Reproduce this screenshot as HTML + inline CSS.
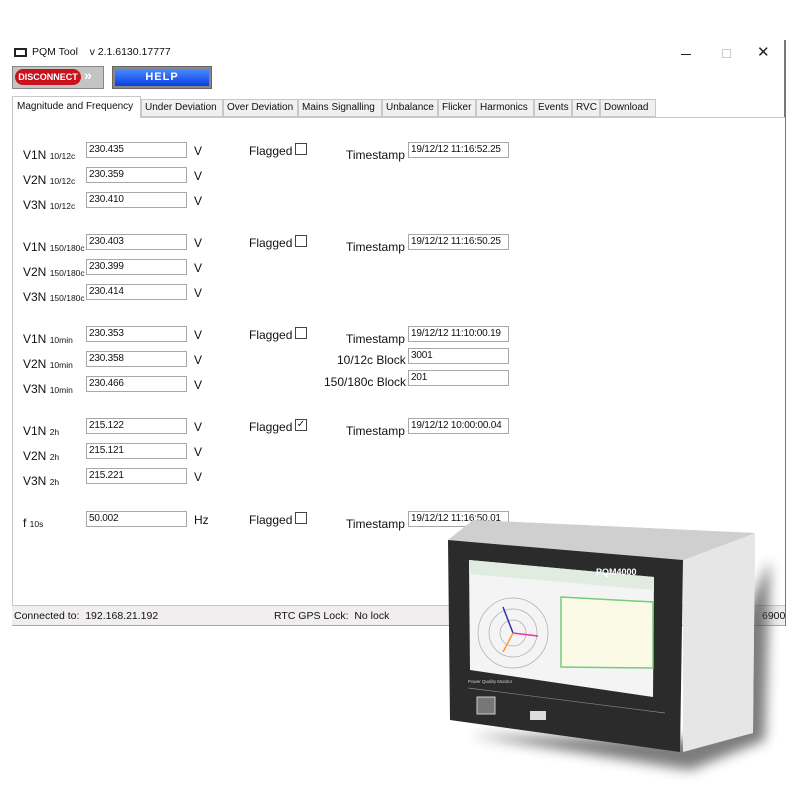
<!DOCTYPE html>
<html><head><meta charset="utf-8"><style>
*{margin:0;padding:0;box-sizing:border-box}
body{width:800px;height:800px;background:#fff;position:relative;overflow:hidden;font-family:"Liberation Sans",sans-serif;font-size:12px;color:#111}
.a{position:absolute;white-space:nowrap}
.in{position:absolute;width:101px;height:16px;border:1px solid #a8a8a8;background:#fff;font-size:10px;letter-spacing:-0.2px;padding-left:2px;line-height:14px;white-space:nowrap;overflow:hidden}
.ts{left:408px}
.lab{font-size:12px}
.lab small{font-size:8.5px}
.cb{position:absolute;width:12px;height:12px;border:1px solid #444;background:#fff}
.tab{position:absolute;top:99px;height:18px;border:1px solid #c8c8c8;background:#f0f0f0;font-size:10px;line-height:16px;padding:0 3px;white-space:nowrap;overflow:hidden}
</style></head><body>
<div class="a" style="left:14px;top:48px;width:13px;height:9px;border:2px solid #222;"></div>
<div class="a" style="left:32px;top:46px;font-size:10.5px">PQM Tool &nbsp; &nbsp;v 2.1.6130.17777</div>
<div class="a" style="left:681px;top:54px;width:10px;height:1px;background:#222"></div>
<div class="a" style="left:722px;top:49px;width:9px;height:9px;border:1px solid #ccc"></div>
<div class="a" style="left:757px;top:43px;font-size:15px;color:#222">✕</div>
<div class="a" style="left:784px;top:40px;width:2px;height:586px;background:#777"></div>
<div class="a" style="left:12px;top:66px;width:92px;height:23px;background:#c4c4c4;border:1px solid #888"></div>
<div class="a" style="left:15px;top:69px;width:66px;height:16px;background:#c8121c;border-radius:8px;color:#fff;font-weight:bold;font-size:9px;line-height:16px;text-align:center">DISCONNECT</div>
<div class="a" style="left:84px;top:67px;font-size:14px;color:#fff;font-weight:bold">»</div>
<div class="a" style="left:112px;top:66px;width:100px;height:23px;background:#888;border:1px solid #666"></div>
<div class="a" style="left:115px;top:69px;width:94px;height:17px;background:linear-gradient(#4a8bff,#0a3fe0);color:#fff;font-weight:bold;font-size:11px;line-height:17px;text-align:center;letter-spacing:1px">HELP</div>
<div class="a" style="left:12px;top:117px;width:773px;height:489px;border:1px solid #c8c8c8;border-right:none;background:#fff"></div>
<div class="tab" style="left:12px;top:96px;height:22px;background:#fff;border-bottom:none;padding:0 4px;line-height:20px;width:129px">Magnitude and Frequency</div>
<div class="tab" style="left:141px;width:82px">Under Deviation</div>
<div class="tab" style="left:223px;width:75px">Over Deviation</div>
<div class="tab" style="left:298px;width:84px">Mains Signalling</div>
<div class="tab" style="left:382px;width:56px">Unbalance</div>
<div class="tab" style="left:438px;width:38px">Flicker</div>
<div class="tab" style="left:476px;width:58px">Harmonics</div>
<div class="tab" style="left:534px;width:38px">Events</div>
<div class="tab" style="left:572px;width:28px">RVC</div>
<div class="tab" style="left:600px;width:56px">Download</div>

<div class="a lab" style="left:23px;top:148px">V1N <small>10/12c</small></div>
<div class="a lab" style="left:23px;top:173px">V2N <small>10/12c</small></div>
<div class="a lab" style="left:23px;top:198px">V3N <small>10/12c</small></div>
<div class="in" style="left:86px;top:142px">230.435</div>
<div class="in" style="left:86px;top:167px">230.359</div>
<div class="in" style="left:86px;top:192px">230.410</div>
<div class="a lab" style="left:194px;top:144px">V</div><div class="a lab" style="left:194px;top:169px">V</div><div class="a lab" style="left:194px;top:194px">V</div>
<div class="a lab" style="left:249px;top:144px">Flagged</div><div class="cb" style="left:295px;top:143px"></div>
<div class="a lab" style="left:346px;top:148px">Timestamp</div><div class="in ts" style="top:142px">19/12/12 11:16:52.25</div>

<div class="a lab" style="left:23px;top:240px">V1N <small>150/180c</small></div>
<div class="a lab" style="left:23px;top:265px">V2N <small>150/180c</small></div>
<div class="a lab" style="left:23px;top:290px">V3N <small>150/180c</small></div>
<div class="in" style="left:86px;top:234px">230.403</div>
<div class="in" style="left:86px;top:259px">230.399</div>
<div class="in" style="left:86px;top:284px">230.414</div>
<div class="a lab" style="left:194px;top:236px">V</div><div class="a lab" style="left:194px;top:261px">V</div><div class="a lab" style="left:194px;top:286px">V</div>
<div class="a lab" style="left:249px;top:236px">Flagged</div><div class="cb" style="left:295px;top:235px"></div>
<div class="a lab" style="left:346px;top:240px">Timestamp</div><div class="in ts" style="top:234px">19/12/12 11:16:50.25</div>

<div class="a lab" style="left:23px;top:332px">V1N <small>10min</small></div>
<div class="a lab" style="left:23px;top:357px">V2N <small>10min</small></div>
<div class="a lab" style="left:23px;top:382px">V3N <small>10min</small></div>
<div class="in" style="left:86px;top:326px">230.353</div>
<div class="in" style="left:86px;top:351px">230.358</div>
<div class="in" style="left:86px;top:376px">230.466</div>
<div class="a lab" style="left:194px;top:328px">V</div><div class="a lab" style="left:194px;top:353px">V</div><div class="a lab" style="left:194px;top:378px">V</div>
<div class="a lab" style="left:249px;top:328px">Flagged</div><div class="cb" style="left:295px;top:327px"></div>
<div class="a lab" style="left:346px;top:332px">Timestamp</div><div class="in ts" style="top:326px">19/12/12 11:10:00.19</div>
<div class="a lab" style="left:337px;top:353px">10/12c Block</div><div class="in ts" style="top:348px">3001</div>
<div class="a lab" style="left:324px;top:375px">150/180c Block</div><div class="in ts" style="top:370px">201</div>

<div class="a lab" style="left:23px;top:424px">V1N <small>2h</small></div>
<div class="a lab" style="left:23px;top:449px">V2N <small>2h</small></div>
<div class="a lab" style="left:23px;top:474px">V3N <small>2h</small></div>
<div class="in" style="left:86px;top:418px">215.122</div>
<div class="in" style="left:86px;top:443px">215.121</div>
<div class="in" style="left:86px;top:468px">215.221</div>
<div class="a lab" style="left:194px;top:420px">V</div><div class="a lab" style="left:194px;top:445px">V</div><div class="a lab" style="left:194px;top:470px">V</div>
<div class="a lab" style="left:249px;top:420px">Flagged</div><div class="cb" style="left:295px;top:419px;font-size:10px;line-height:9px;text-align:center">✓</div>
<div class="a lab" style="left:346px;top:424px">Timestamp</div><div class="in ts" style="top:418px">19/12/12 10:00:00.04</div>

<div class="a lab" style="left:23px;top:516px">f <small>10s</small></div>
<div class="in" style="left:86px;top:511px">50.002</div>
<div class="a lab" style="left:194px;top:513px">Hz</div>
<div class="a lab" style="left:249px;top:513px">Flagged</div><div class="cb" style="left:295px;top:512px"></div>
<div class="a lab" style="left:346px;top:517px">Timestamp</div><div class="in ts" style="top:511px">19/12/12 11:16:50.01</div>
<div class="a" style="left:12px;top:606px;width:773px;height:20px;background:#f0eeee;border-bottom:1px solid #aaa"></div>
<div class="a" style="left:14px;top:610px;font-size:10.5px">Connected to:&nbsp; 192.168.21.192</div>
<div class="a" style="left:274px;top:610px;font-size:10.5px">RTC GPS Lock:&nbsp; No lock</div>
<div class="a" style="left:762px;top:610px;font-size:10.5px">6900</div>
<svg class="a" style="left:0;top:0" width="800" height="800">
<defs><filter id="b"><feGaussianBlur stdDeviation="6"/></filter></defs>
<polygon points="470,735 690,770 765,740 770,560 690,740" fill="#444" filter="url(#b)" opacity="0.7"/>
<polygon points="473,520 755,533 753,733 683,750 683,560" fill="#d8d8d8"/>
<polygon points="683,560 755,533 753,733 683,752" fill="#e6e6e6"/>
<polygon points="473,520 755,533 683,560 448,540" fill="#cfcfcf"/>
<polygon points="448,540 683,560 680,752 450,720" fill="#2b2b2b"/>
<polygon points="469,560 654,577 653,697 470,670" fill="#f4f4f4"/>
<polygon points="469,560 654,577 654,590 469,574" fill="#e0ece0"/>
<circle cx="513" cy="633" r="35" fill="none" stroke="#aaa" stroke-width="0.7"/>
<circle cx="513" cy="633" r="24" fill="none" stroke="#aaa" stroke-width="0.7"/>
<circle cx="513" cy="633" r="13" fill="none" stroke="#aaa" stroke-width="0.7"/>
<line x1="513" y1="633" x2="503" y2="607" stroke="#33a" stroke-width="1.5"/>
<line x1="513" y1="633" x2="538" y2="636" stroke="#e3a" stroke-width="1.5"/>
<line x1="513" y1="633" x2="503" y2="652" stroke="#f93" stroke-width="1.5"/>
<polygon points="561,597 653,602 653,668 561,667" fill="#fafae6" stroke="#7c7" stroke-width="1.5"/>
<text x="596" y="575" font-family="Liberation Sans" font-size="9" font-weight="bold" fill="#fff">PQM4000</text>
<text x="468" y="683" font-family="Liberation Sans" font-size="4.5" fill="#ccc">Power Quality Monitor</text>
<rect x="477" y="697" width="18" height="17" fill="#777" stroke="#ccc"/>
<rect x="530" y="711" width="16" height="9" fill="#ddd"/>
<line x1="468" y1="688" x2="665" y2="713" stroke="#888" stroke-width="0.7"/>
</svg>
</body></html>
